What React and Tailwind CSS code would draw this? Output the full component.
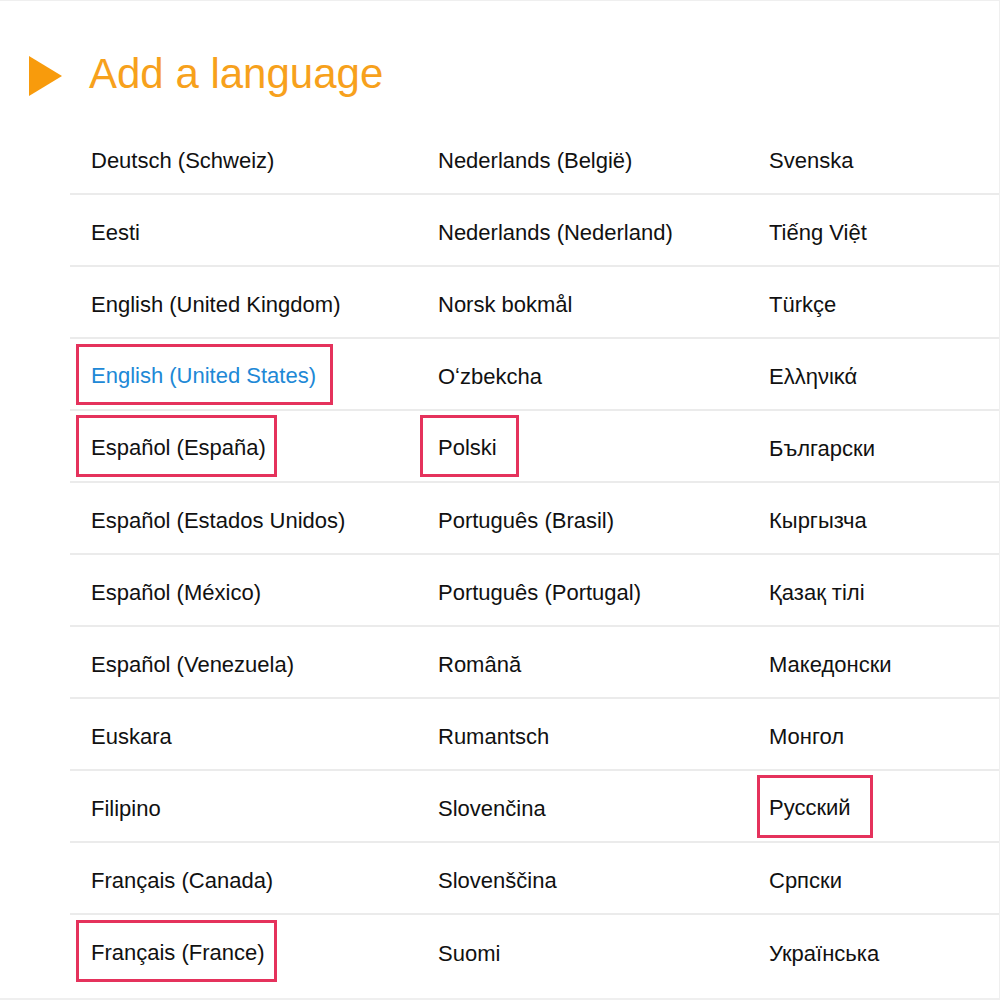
import React from 'react';

// each column of the picker; `box` marks an entry drawn with a highlight frame
const columns = [
  {
    className: 'w-[348px]',
    cell: 'pl-[21px]',
    items: [
      { name: 'Deutsch (Schweiz)' },
      { name: 'Eesti' },
      { name: 'English (United Kingdom)' },
      { name: 'English (United States)', current: true, box: '-ml-[15px] pl-[12px] w-[257px] h-[61px]' },
      { name: 'Español (España)', box: '-ml-[15px] pl-[12px] w-[201px] h-[62px]' },
      { name: 'Español (Estados Unidos)' },
      { name: 'Español (México)' },
      { name: 'Español (Venezuela)' },
      { name: 'Euskara' },
      { name: 'Filipino' },
      { name: 'Français (Canada)' },
      { name: 'Français (France)', box: '-ml-[15px] pl-[12px] w-[201px] h-[62px]' },
    ],
  },
  {
    className: 'w-[330px]',
    cell: 'pl-[20px]',
    items: [
      { name: 'Nederlands (België)' },
      { name: 'Nederlands (Nederland)' },
      { name: 'Norsk bokmål' },
      { name: 'Oʻzbekcha' },
      { name: 'Polski', box: '-ml-[18px] pl-[15px] w-[99px] h-[62px]' },
      { name: 'Português (Brasil)' },
      { name: 'Português (Portugal)' },
      { name: 'Română' },
      { name: 'Rumantsch' },
      { name: 'Slovenčina' },
      { name: 'Slovenščina' },
      { name: 'Suomi' },
    ],
  },
  {
    className: 'flex-1',
    cell: 'pl-[21px]',
    items: [
      { name: 'Svenska' },
      { name: 'Tiếng Việt' },
      { name: 'Türkçe' },
      { name: 'Ελληνικά' },
      { name: 'Български' },
      { name: 'Кыргызча' },
      { name: 'Қазақ тілі' },
      { name: 'Македонски' },
      { name: 'Монгол' },
      { name: 'Русский', box: '-ml-[12px] pl-[9px] w-[116px] h-[63px]' },
      { name: 'Српски' },
      { name: 'Українська' },
    ],
  },
];

function LanguageCell({ item, cell, last }) {
  const text = item.current ? 'text-[#2088d6]' : 'text-[#111111]';
  return (
    <div
      className={`flex items-center h-[72px] ${cell} ${last ? '' : 'border-b-2 border-[#ebebeb]'}`}
    >
      {item.box ? (
        <span className={`inline-flex items-center pt-[4px] border-[3px] border-[#e5325c] ${item.box} ${text}`}>
          {item.name}
        </span>
      ) : (
        <span className={`mt-[5px] ${text}`}>{item.name}</span>
      )}
    </div>
  );
}

export default function App() {
  return (
    <div
      className="w-[1000px] h-[1000px] bg-white border-t border-r border-b-2 border-[#efefef] overflow-hidden"
      style={{ fontFamily: '"Liberation Sans", Arial, sans-serif' }}
    >
      {/* Header */}
      <div className="flex items-center h-[122px] pt-[28px] pl-[29px] gap-[27px]">
        <svg width="33" height="40" viewBox="0 0 33 40">
          <polygon points="0,0 33,20 0,40" fill="#f89b0c" />
        </svg>
        <h1 className="text-[42px] leading-none text-[#f7a11c] -mt-[5px]">Add a language</h1>
      </div>

      {/* Language list */}
      <div className="flex ml-[70px] text-[22px] leading-none">
        {columns.map((col, ci) => (
          <div key={ci} className={col.className}>
            {col.items.map((item, i) => (
              <LanguageCell
                key={item.name}
                item={item}
                cell={col.cell}
                last={i === col.items.length - 1}
              />
            ))}
          </div>
        ))}
      </div>
    </div>
  );
}
